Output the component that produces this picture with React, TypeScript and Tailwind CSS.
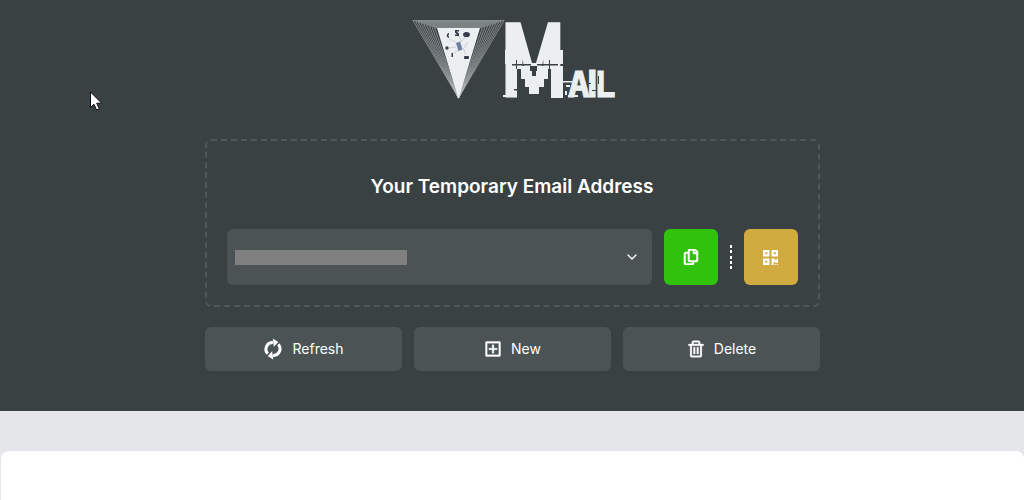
import { useState } from 'react';
import { BiTrash } from 'react-icons/bi';
import { FaQrcode, FaRegCopy } from 'react-icons/fa';
import { RiAddBoxLine } from 'react-icons/ri';
import { FiChevronDown } from 'react-icons/fi';

const actions = [
  { label: 'Refresh', icon: <RefreshIcon /> },
  { label: 'New', icon: <RiAddBoxLine size={20} strokeWidth={0.4} /> },
  { label: 'Delete', icon: <BiTrash size={20} strokeWidth={0.4} /> },
];

export default function App() {
  return (
    <div className="flex min-h-screen flex-col bg-[#e5e6ea] font-[Inter,sans-serif]">
      <header className="bg-[#3a4142] px-4 pt-4 pb-10 text-white">
        <div className="mx-auto max-w-[615px]">
          <a href="#" aria-label="Mail home" className="mx-auto block w-[210px]">
            <Logo />
          </a>
          <AddressCard />
          <div className="mt-5 grid grid-cols-3 gap-3">
            {actions.map(({ label, icon }) => (
              <button
                key={label}
                className="flex h-11 items-center justify-center gap-2 rounded-md bg-[#4c5355] text-sm hover:bg-[#576062]"
              >
                {icon}
                {label}
              </button>
            ))}
          </div>
        </div>
      </header>
      <main className="mt-10 ml-px flex-1 rounded-t-lg bg-white" />
      <Cursor />
    </div>
  );
}

function AddressCard() {
  const [address, setAddress] = useState('');

  return (
    <section className="mt-9 rounded-md border-2 border-dashed border-[#50575a] p-5">
      <h1 className="pt-3 text-center text-[19px] leading-7 font-semibold">Your Temporary Email Address</h1>
      <div className="mt-7 flex items-center gap-3">
        <div className="relative flex-1">
          <select
            aria-label="Email address"
            value={address}
            onChange={e => setAddress(e.target.value)}
            className="block h-14 w-full appearance-none rounded-md bg-[#4c5355] px-2 text-sm"
          >
            <option value=""></option>
          </select>
          {/* address stays masked */}
          <span className="pointer-events-none absolute top-[21px] left-2 h-[15px] w-[172px] bg-[#808080]" />
          <FiChevronDown size={16} className="pointer-events-none absolute top-5 right-3" />
        </div>
        <button aria-label="Copy" className="flex h-14 w-[54px] items-center justify-center rounded-md bg-[#30c20c]">
          <FaRegCopy size={16} strokeWidth={16} />
        </button>
        <span className="flex h-6 w-0.5 flex-col justify-between">
          {[0, 1, 2, 3, 4].map(i => (
            <span key={i} className="h-[3px] bg-white" />
          ))}
        </span>
        <button aria-label="QR code" className="flex h-14 w-[54px] items-center justify-center rounded-md bg-[#d0ab40]">
          <FaQrcode size={17} />
        </button>
      </div>
    </section>
  );
}

function RefreshIcon() {
  return (
    <svg viewBox="0 0 22 22" className="size-[22px]">
      <path
        d="M5.800 15.600A6.500 6.500 0 0 1 11 4.600M16.200 6.400A6.500 6.500 0 0 1 11 17.400"
        fill="none"
        stroke="#fff"
        strokeWidth="3"
      />
      <path d="M10.800 .6L16.300 4L11.800 8.800zM11.200 21.400L5.700 18L10.200 13.200z" fill="#fff" />
    </svg>
  );
}

// nested triangles, from the outer outline to the solid one
const rings = [0, 1, 2, 3, 4, 5, 6, 7, 8];

function Logo() {
  return (
    <svg viewBox="-4 0 210 87" className="block w-full" fill="#eceff1">
      <g transform="translate(1 0)">
        <g fill="none" stroke="#b4b9ba" strokeWidth="0.6">
          {rings.map(i => (
            <path key={i} d={`M${1 + i * 2.7} ${4.5 + i * 0.9}H${92 - i * 2.7}L46.5 82Z`} />
          ))}
        </g>
        <path d="M25 12H68L46.5 83Z" />
        <g fill="#343c4c">
          <ellipse cx="54.5" cy="18.5" rx="3.4" ry="2.6" />
          <path d="M43 14h4v1.500h-2.500l2.500 2v2.500h-4v-1.500h2l-2-2z" />
          <rect x="52" y="40" width="5" height="3" rx="1" />
          <circle cx="35" cy="32" r="1.700" />
          <path d="M37 17c-3 .5-3 4.500 0 5v-1.500c-1-.5-1-1.500 0-2z" />
          <rect x="39.500" y="37" width="1.500" height="4" />
        </g>
        <path d="M44 27l4-1.500 2.500 8-4 1.500z" fill="#6f7fa0" />
        <path
          d="M37 23l5 2 3 2M47 20l2 5M53 21l-4 5M37 32l7-1M51 32l3 6M42 37l4-3M56 27c-3 1-4 3-2 5"
          fill="none"
          stroke="#b3bac4"
          strokeWidth="0.6"
        />
      </g>
      <g stroke="#eceff1" fontWeight="700">
        <text x="93" y="79" fontSize="96" strokeWidth="5" fontFamily="'DejaVu Sans Mono', monospace">M</text>
        <g strokeWidth="1">
          <text x="157" y="81" fontSize="36" fontFamily="'DejaVu Sans Mono', monospace">A</text>
          <text x="176" y="81" fontSize="38" fontFamily="'Liberation Sans', sans-serif">I</text>
          <text x="183" y="81" fontSize="36" fontFamily="'DejaVu Sans Mono', monospace">L</text>
        </g>
      </g>
      {/* glitch: shifted slabs over the lower half, then the cuts between them */}
      <path d="M94 34h17v14h-17zM136 34h16v14h-16zM110 50h27v13h-27zM114 63h19v8h-19zM118 71h10v7h-10zM95 50h11v31h-11zM140 50h12v32h-12z" />
      <g fill="#3a4142">
        <path d="M106 53h4v29h-4zM110 63h4v19h-4zM114 71h4v11h-4zM118 78h10v4h-10zM128 71h5v11h-5zM133 63h4v19h-4zM137 53h3v29h-3z" />
        <path d="M109.500 6h27.500l-12 41h-4z" />
        <path d="M119 50h7v5h-7zM121 55h4v5h-4z" />
        <path d="M101 48h19v1.500h-19zM126 48h21v1.500h-21zM105 44h1v9h-1zM138 44h1v9h-1zM91 64h3v18h-3zM103 73h4v1.500h-4z" />
      </g>
      <path d="M92 79h14v2h-14zM150 65h12v1.500h-12zM155 69h4v2h-4zM154 75h2v4h-2zM157 79h10v2h-10zM192 79h9v2h-9z" />
      <path d="M176 67h4v1h-4zM187 60h1v8h-1zM181 74h4v1h-4z" fill="#3a4142" />
    </svg>
  );
}

function Cursor() {
  return (
    <svg viewBox="0 0 13 20" className="pointer-events-none absolute top-[91px] left-[90px] h-5 w-[13px]">
      <path d="M.5 1v15.500l3.500-3.300 2.600 5.800 2.700-1.200-2.600-5.600h5z" fill="#fff" stroke="#0b0d14" />
    </svg>
  );
}
